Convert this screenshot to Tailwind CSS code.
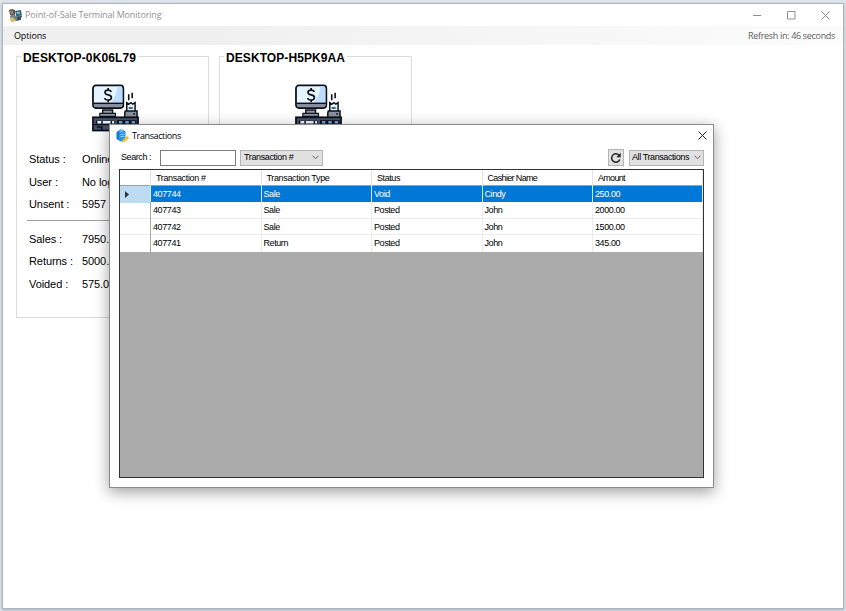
<!DOCTYPE html>
<html lang="en">
<head>
<meta charset="utf-8">
<title>Point-of-Sale Terminal Monitoring</title>
<script src="https://cdn.jsdelivr.net/npm/@tailwindcss/browser@4"></script>
</head>
<body class="w-[846px] h-[611px] overflow-hidden bg-[#dfe5ec] font-['Liberation_Sans',Arial,sans-serif] text-black">
<svg class="hidden" aria-hidden="true">
  <symbol id="pos" viewBox="0 0 48 48">
    <path d="M11 26h10v6H11z" fill="#9096a5" stroke="#111722" stroke-width="1.5"/>
    <path d="M8 29.500h16v3H8z" fill="#9096a5" stroke="#111722" stroke-width="1.200"/>
    <rect x="1" y="1" width="31" height="23" rx="3" fill="#e6f4ff" stroke="#0c1018" stroke-width="1.800"/>
    <path d="M26 2h3.500q1.500 0 1.500 1.500v15H19q6-6 7-16.500z" fill="#bcdcff"/>
    <path d="M2 19.500h29v2q0 1.700-2 1.700H4q-2 0-2-1.700z" fill="#8a909f"/>
    <path d="M1.500 19.200h30" stroke="#0c1018" stroke-width="1.500"/>
    <path d="M19.800 7.500q-1-1.800-3.300-1.800c-4.300 0-4.300 4.200 0 4.900 4.600.7 4.300 5.200-.2 5.200q-2.600 0-3.600-2M16.500 3.500v2.500M16.500 15.500V18" fill="none" stroke="#0c1018" stroke-width="1.700"/>
    <path d="M37.500 10v6M41 8.500v5.500" stroke="#0c1018" stroke-width="1.600"/>
    <path d="M35.500 28V18.500l2.200 1.500 2-1.500 2 1.500 2.300-1.500V28z" fill="#d9f1fb" stroke="#0c1018" stroke-width="1.500"/>
    <path d="M37.500 24h4" stroke="#0c1018" stroke-width="1.300"/>
    <path d="M34 27h12v7H33.500v-5z" fill="#8a909f" stroke="#0c1018" stroke-width="1.500"/>
    <path d="M42 30h2" stroke="#0c1018" stroke-width="1.300"/>
    <rect x="1" y="33.500" width="46" height="13.500" fill="#46536d" stroke="#0c1018" stroke-width="1.800"/>
    <path d="M4 40v-3h19v3z" fill="#0c1018"/>
    <path d="M5.500 38.500h4M11 38.500h8M20.500 38.500h2" stroke="#eef6ff" stroke-width="2.500"/>
    <path d="M25.500 36.500h20v4h-20z" fill="#0c1018"/>
    <path d="M27.500 38.500h3.500M34 38.500h3.500M40.500 38.500h3.500" stroke="#67a5e6" stroke-width="2.500"/>
    <path d="M2 41h44" stroke="#0c1018" stroke-width="1.300"/>
    <path d="M5 43.500h5v3" fill="none" stroke="#0c1018" stroke-width="1.500"/>
  </symbol>
</svg>

<div class="relative mt-[3px] ml-[2px] w-[842px] h-[606px] border border-[#b1b5bb] bg-white shadow-[0_1px_3px_rgba(80,90,110,0.4)]">
  <header class="h-[22px] flex items-center pl-[6px] pr-[13px] text-[#929292]">
    <svg class="w-[13px] h-[13px]" viewBox="0 0 13 13">
      <path d="M0 1l3-1 3 1v5l-2 1-3-1z" fill="#3f5a66"/><path d="M6 2l6-1 1 7-5 2z" fill="#31606e"/>
      <path d="M1 2l3-.500.500 3-3 .500z" fill="#c9705c"/><path d="M7.500 3l3-.500.500 2.500H8z" fill="#6fc4d8"/>
      <path d="M1 7l4-2 2 2 5-1v4l-4 2-6 .500z" fill="#6d868f"/><path d="M1 10l2-2 2 1.500 2 2-2 1H2z" fill="#e3bd59"/><path d="M8 8l4-1v4l-4 .500z" fill="#38505c"/>
    </svg>
    <span class="ml-[3px] font-['Open_Sans',sans-serif] text-[9px] tracking-[-0.15px] whitespace-nowrap">Point-of-Sale Terminal Monitoring</span>
    <div class="ml-auto flex items-center gap-[25px]">
      <svg class="w-[9px] h-[9px]" viewBox="0 0 9 9"><path d="M0 4.500h8" stroke="#8f8f8f"/></svg>
      <svg class="w-[9px] h-[9px]" viewBox="0 0 9 9"><path d="M.5.500h7.500v7.500H.5z" fill="none" stroke="#929292"/></svg>
      <svg class="w-[9px] h-[9px]" viewBox="0 0 9 9"><path d="M.5.500l8 8m0-8l-8 8" stroke="#8c8c8c"/></svg>
    </div>
  </header>
  <nav class="h-[19px] flex items-center justify-between pl-[11px] pr-[8px] bg-linear-to-r from-[#f0f0f0] from-25% to-[#fcfcfc] font-['Open_Sans',sans-serif] text-[9px]">
    <span class="tracking-[-0.15px]">Options</span>
    <span class="text-[#606060] tracking-[-0.32px]">Refresh in: 46 seconds</span>
  </nav>

  <main class="flex gap-[10px] pt-[11px] pl-[13px]">
    <section class="relative w-[193px] h-[262px] border border-[#dcdcdc]">
      <h2 class="absolute -top-[6px] left-[4px] px-[2px] bg-white font-bold text-[12px] leading-[15px] tracking-[0.13px] whitespace-nowrap">DESKTOP-0K06L79</h2>
      <svg class="block ml-[75px] mt-[27px] w-[47px] h-[48px]"><use href="#pos"/></svg>
      <dl class="grid grid-cols-[53px_1fr] auto-rows-[22.500px] items-center ml-[12px] mt-[16px] text-[11px] tracking-[-0.08px] whitespace-nowrap">
        <dt>Status :</dt><dd>Online</dd>
        <dt>User :</dt><dd>No logged</dd>
        <dt>Unsent :</dt><dd>5957</dd>
      </dl>
      <div class="ml-[10px] mr-[10px] mt-[4px] h-px bg-[#a0a0a0]"></div>
      <dl class="grid grid-cols-[53px_1fr] auto-rows-[22.500px] items-center ml-[12px] mt-[7px] text-[11px] tracking-[-0.08px] whitespace-nowrap">
        <dt>Sales :</dt><dd>7950.00</dd>
        <dt>Returns :</dt><dd>5000.00</dd>
        <dt>Voided :</dt><dd>575.00</dd>
      </dl>
    </section>
    <section class="relative w-[193px] h-[262px] border border-[#dcdcdc]">
      <h2 class="absolute -top-[6px] left-[4px] px-[2px] bg-white font-bold text-[12px] leading-[15px] tracking-[0.08px] whitespace-nowrap">DESKTOP-H5PK9AA</h2>
      <svg class="block ml-[75px] mt-[27px] w-[47px] h-[48px]"><use href="#pos"/></svg>
    </section>
  </main>

  <div role="dialog" class="absolute left-[106px] top-[120px] w-[605px] h-[364px] border border-[#8b8b8b] bg-white px-[9px] flex flex-col shadow-[0_4px_14px_rgba(0,0,0,0.38)]">
    <div class="h-[21px] -mx-[3px] flex items-center shrink-0">
      <svg class="w-[13px] h-[14px]" viewBox="0 0 13 14">
        <path d="M.500 3l4-2.500L9 2v9l-4 1.500L.500 10z" fill="#1976d2"/><path d="M3 3h6.500v8.500H3z" fill="#2594ed"/><path d="M3.500.500h4v3h-4z" fill="#62b8f5"/><path d="M4.500 5.500h4M4.500 7.500h4" stroke="#b8dfff" stroke-width=".7"/>
        <path d="M6 13.500l.5-2.500L11.200 7 13 9l-4.500 4z" fill="#f5bd28"/>
      </svg>
      <span class="ml-[3px] font-['Open_Sans',sans-serif] text-[9px] tracking-[-0.38px]">Transactions</span>
      <svg class="ml-auto w-[9px] h-[9px]" viewBox="0 0 9 9"><path d="M.5.500l8 8m0-8l-8 8" stroke="#222"/></svg>
    </div>
    <div class="h-[23px] shrink-0 flex items-center text-[9px] whitespace-nowrap">
      <span class="w-[41px] pl-[2px] tracking-[-0.42px] word-spacing-[1px]">Search :</span>
      <div class="w-[76px] h-[16px] border border-[#7e7e7e] bg-white"></div>
      <div class="ml-[4px] w-[83px] h-[16px] border border-[#b5b5b5] bg-[#e1e1e1] flex items-center pl-[3px] pr-[3px] justify-between tracking-[-0.37px]">
        <span>Transaction #</span>
        <svg class="w-[7px] h-[5px]" viewBox="0 0 7 5"><path d="M.5.700l3 3 3-3" fill="none" stroke="#555" stroke-width=".9"/></svg>
      </div>
      <div class="ml-auto w-[16px] h-[17px] border border-[#b5b5b5] bg-[#e1e1e1] flex items-center justify-center">
        <svg class="w-[12px] h-[12px] shrink-0" viewBox="0 0 12 12"><path d="M9.800 7.500A4.200 4.200 0 1 1 9 3.200" fill="none" stroke="#222" stroke-width="1.500"/><path d="M10.700.700v4.500H6.300z" fill="#222"/></svg>
      </div>
      <div class="ml-[5px] w-[75px] h-[16px] border border-[#b5b5b5] bg-[#e1e1e1] flex items-center pl-[2px] pr-[2px] justify-between tracking-[-0.41px]">
        <span>All Transactions</span>
        <svg class="w-[7px] h-[5px]" viewBox="0 0 7 5"><path d="M.5.700l3 3 3-3" fill="none" stroke="#555" stroke-width=".9"/></svg>
      </div>
    </div>
    <div class="w-[585px] h-[309px] border border-[#333] bg-[#ababab] text-[9px] tracking-[-0.41px]">
      <div class="grid grid-cols-[31px_110.500px_110.500px_110.500px_110.500px_1fr] h-[15.500px] border-b border-[#a0a0a0] bg-white leading-[16px] [&>*]:border-r [&>*]:border-[#e3e3e3] [&>*]:pl-[5px]">
        <span></span><span class="tracking-[-0.35px]">Transaction #</span><span class="tracking-[-0.35px]">Transaction Type</span><span>Status</span><span class="tracking-[-0.65px]">Cashier Name</span><span class="tracking-[-0.7px]">Amount</span>
      </div>
      <div class="grid grid-cols-[31px_110.500px_110.500px_110.500px_110.500px_1fr] h-[16.500px] bg-[#0078d7] text-white leading-[17px] [&>*]:border-r [&>*]:border-[#dce7f0] [&>*]:pl-[2px]">
        <span class="bg-[#bcdcf4] flex items-center"><svg class="ml-[3px] w-[4px] h-[7px]" viewBox="0 0 4 7"><path d="M0 0l4 3.500L0 7z" fill="#333"/></svg></span><span>407744</span><span>Sale</span><span>Void</span><span>Cindy</span><span>250.00</span>
      </div>
      <div class="grid grid-cols-[31px_110.500px_110.500px_110.500px_110.500px_1fr] h-[16.500px] bg-white border-b border-[#ececec] leading-[17px] [&>*]:border-r [&>*]:border-[#ececec] [&>*:first-child]:border-[#a8a8a8] [&>*]:pl-[2px]">
        <span></span><span>407743</span><span>Sale</span><span>Posted</span><span>John</span><span>2000.00</span>
      </div>
      <div class="grid grid-cols-[31px_110.500px_110.500px_110.500px_110.500px_1fr] h-[16.500px] bg-white border-b border-[#ececec] leading-[17px] [&>*]:border-r [&>*]:border-[#ececec] [&>*:first-child]:border-[#a8a8a8] [&>*]:pl-[2px]">
        <span></span><span>407742</span><span>Sale</span><span>Posted</span><span>John</span><span>1500.00</span>
      </div>
      <div class="grid grid-cols-[31px_110.500px_110.500px_110.500px_110.500px_1fr] h-[16.500px] bg-white leading-[17px] [&>*]:border-r [&>*]:border-[#ececec] [&>*:first-child]:border-[#a8a8a8] [&>*]:pl-[2px]">
        <span></span><span>407741</span><span>Return</span><span>Posted</span><span>John</span><span>345.00</span>
      </div>
    </div>
  </div>
</div>
</body>
</html>
